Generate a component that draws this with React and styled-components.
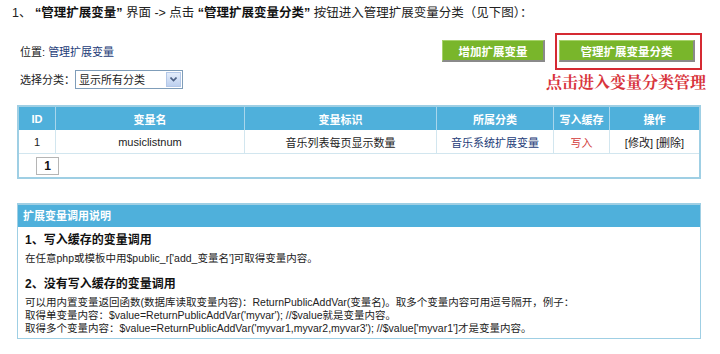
import styled, { createGlobalStyle } from 'styled-components';

const GlobalStyle = createGlobalStyle`
    body {
        margin: 0;
        background: #ffffff;
        font-family: "Liberation Sans", "Noto Sans CJK SC", sans-serif;
        font-size: 11px;
        color: #222;
    }
`;

const Page = styled.div`
    width: 720px;
    height: 354px;
    overflow: hidden;
    padding: 5px 0 0 8px;
    box-sizing: border-box;
`;

const Intro = styled.div`
    font-size: 12.5px;
    line-height: 16px;
    padding-left: 4px;
    color: #222;

    b {
        font-weight: bold;
        color: #111;
    }
`;

const Toolbar = styled.div`
    display: flex;
    justify-content: space-between;
    align-items: flex-start;
    width: 689px;
    margin: 12px 0 0 9px;
    height: 72px;
`;

const LeftCol = styled.div`
    padding: 11px 0 0 3px;
    display: flex;
    flex-direction: column;
    gap: 10px;
`;

const Location = styled.div`
    line-height: 16px;
    color: #222;

    a {
        color: #1d3c78;
        text-decoration: none;
    }
`;

const FilterRow = styled.div`
    display: flex;
    align-items: center;
    line-height: 18px;
`;

const Select = styled.div`
    display: flex;
    align-items: center;
    justify-content: space-between;
    width: 103px;
    height: 17px;
    border: 1px solid #7f9db9;
    background: #fff;
    padding-left: 3px;
    box-sizing: content-box;
`;

const SelectArrow = styled.span`
    width: 15px;
    height: 15px;
    margin-right: 1px;
    background: linear-gradient(#e4edfb, #bdd0ef);
    border: 1px solid #b4c8e8;
    box-sizing: border-box;
    display: flex;
    align-items: center;
    justify-content: center;
`;

const RightGroup = styled.div`
    display: flex;
    align-items: flex-start;
    gap: 1px;
`;

const GreenButton = styled.div`
    width: ${p => p.$w}px;
    height: 22px;
    margin-top: ${p => p.$top || 0}px;
    background: #79b62b;
    color: #fff;
    font-weight: bold;
    font-size: 11.5px;
    display: flex;
    align-items: center;
    justify-content: center;
    border-top: 1px solid #a6d26a;
    border-left: 1px solid #a6d26a;
    border-right: 2px solid #8a8a8a;
    border-bottom: 2px solid #8a8a8a;
    box-sizing: border-box;
`;

const Annotated = styled.div`
    display: flex;
    flex-direction: column;
    align-items: flex-end;
`;

const RedFrame = styled.div`
    border: 2px solid #d52a33;
    padding: 5px 5px 6px 2px;
    margin-right: 4px;
`;

const Note = styled.div`
    margin-top: 3px;
    color: #d8343c;
    font-family: "Noto Serif CJK SC", "Noto Sans CJK SC", serif;
    font-size: 16px;
    font-weight: bold;
    line-height: 18px;
`;

const Table = styled.table`
    margin-left: 9px;
    width: 684px;
    border-collapse: collapse;
    border: 2px solid #9fcfe4;
`;

const Th = styled.th`
    background: #4fb0db;
    color: #fff;
    font-weight: bold;
    height: 23px;
    padding: 0;
    border-right: 1px solid #a8d6ec;
    width: ${p => p.$w ? `${p.$w}px` : 'auto'};
    text-align: center;
`;

const Td = styled.td`
    height: 23px;
    padding: 0;
    text-align: center;
    border-right: 1px solid #d2e6ef;
    border-bottom: 1px solid #d2e6ef;
    color: ${p => p.$color || '#222'};
`;

const PagerCell = styled.td`
    height: 23px;
    padding: 0 0 0 17px;
`;

const PageBox = styled.span`
    display: inline-flex;
    align-items: center;
    justify-content: center;
    width: 21px;
    height: 16px;
    border: 1px solid #b5b5b5;
    font-weight: bold;
    font-size: 12px;
    color: #111;
`;

const InfoBox = styled.div`
    margin: 24px 0 0 9px;
    width: 684px;
    height: 136px;
    border: 1px solid #9fcfe4;
    border-top-width: 2px;
    box-sizing: border-box;
`;

const InfoHead = styled.div`
    background: #4fb0db;
    color: #fff;
    font-weight: bold;
    height: 22px;
    line-height: 22px;
    padding-left: 5px;
`;

const InfoBody = styled.div`
    padding: 7px 0 0 7px;
    line-height: 13px;
    font-size: 10.5px;
`;

const SubTitle = styled.div`
    font-weight: bold;
    font-size: 12px;
    color: #111;
    margin-bottom: 5px;
    margin-top: ${p => p.$top || 0}px;
`;

const Line = styled.div`
    color: #222;
    white-space: nowrap;
`;

const columns = [
    { label: 'ID', w: 36 },
    { label: '变量名', w: 188 },
    { label: '变量标识', w: 191 },
    { label: '所属分类', w: 116 },
    { label: '写入缓存', w: 55 },
    { label: '操作' },
];

export default function App() {
    return (
        <>
            <GlobalStyle />
            <Page>
                <Intro>
                    1、 <b>“管理扩展变量”</b> 界面 -&gt; 点击 <b>“管理扩展变量分类”</b> 按钮进入管理扩展变量分类（见下图）：
                </Intro>

                <Toolbar>
                    <LeftCol>
                        <Location>位置: <a>管理扩展变量</a></Location>
                        <FilterRow>
                            选择分类：
                            <Select>
                                显示所有分类
                                <SelectArrow>
                                    <svg width="7" height="5" viewBox="0 0 7 5">
                                        <path d="M0.5 0.5 L3.5 3.5 L6.5 0.5" fill="none" stroke="#4d6185" strokeWidth="1.6" />
                                    </svg>
                                </SelectArrow>
                            </Select>
                        </FilterRow>
                    </LeftCol>

                    <RightGroup>
                        <GreenButton $w={103} $top={7}>增加扩展变量</GreenButton>
                        <Annotated>
                            <RedFrame>
                                <GreenButton $w={136}>管理扩展变量分类</GreenButton>
                            </RedFrame>
                            <Note>点击进入变量分类管理</Note>
                        </Annotated>
                    </RightGroup>
                </Toolbar>

                <Table>
                    <thead>
                        <tr>
                            {columns.map(c => (
                                <Th key={c.label} $w={c.w}>{c.label}</Th>
                            ))}
                        </tr>
                    </thead>
                    <tbody>
                        <tr>
                            <Td>1</Td>
                            <Td>musiclistnum</Td>
                            <Td>音乐列表每页显示数量</Td>
                            <Td $color="#1d3c78">音乐系统扩展变量</Td>
                            <Td $color="#d23a3a">写入</Td>
                            <Td>[修改] [删除]</Td>
                        </tr>
                        <tr>
                            <PagerCell colSpan={6}>
                                <PageBox>1</PageBox>
                            </PagerCell>
                        </tr>
                    </tbody>
                </Table>

                <InfoBox>
                    <InfoHead>扩展变量调用说明</InfoHead>
                    <InfoBody>
                        <SubTitle>1、写入缓存的变量调用</SubTitle>
                        <Line>在任意php或模板中用$public_r['add_变量名']可取得变量内容。</Line>
                        <SubTitle $top={13}>2、没有写入缓存的变量调用</SubTitle>
                        <Line>可以用内置变量返回函数(数据库读取变量内容)：ReturnPublicAddVar(变量名)。取多个变量内容可用逗号隔开，例子：</Line>
                        <Line>取得单变量内容：$value=ReturnPublicAddVar('myvar'); //$value就是变量内容。</Line>
                        <Line>取得多个变量内容：$value=ReturnPublicAddVar('myvar1,myvar2,myvar3'); //$value['myvar1']才是变量内容。</Line>
                    </InfoBody>
                </InfoBox>
            </Page>
        </>
    );
}
